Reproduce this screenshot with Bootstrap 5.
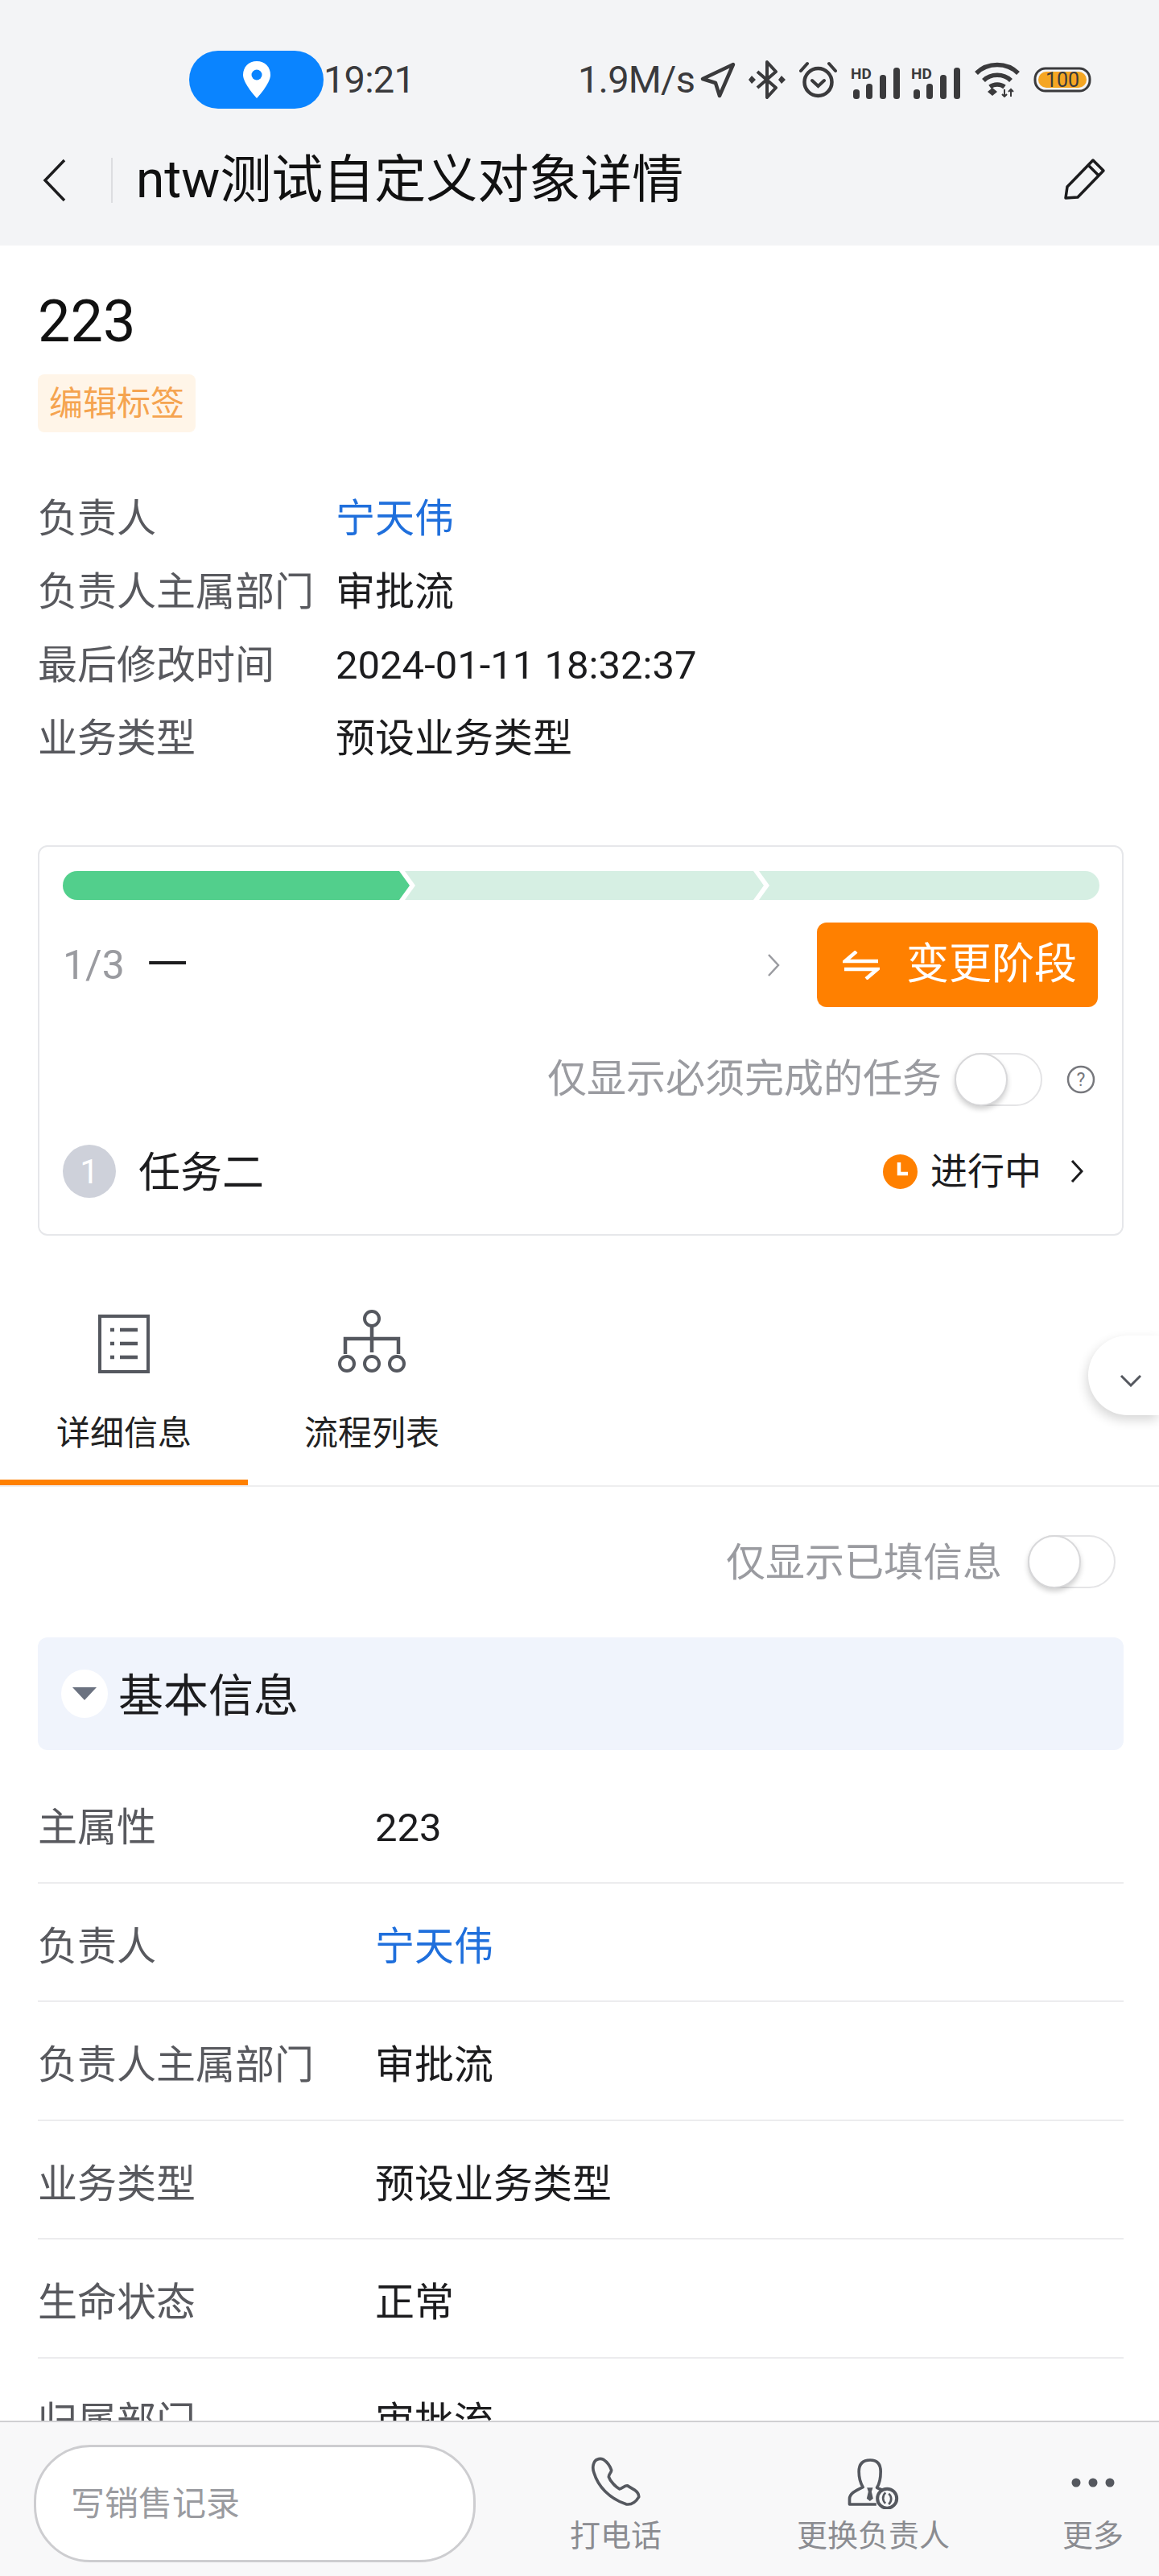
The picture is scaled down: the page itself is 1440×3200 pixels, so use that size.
<!DOCTYPE html>
<html lang="zh-CN">
<head>
  <meta charset="utf-8">
  <meta name="viewport" content="width=device-width, initial-scale=1.0">
  <link href="https://cdn.jsdelivr.net/npm/bootstrap@5.3.0/dist/css/bootstrap.min.css" rel="stylesheet">
  <title>ntw测试自定义对象详情</title>
  <style>
    html, body { margin: 0; height: 100%; overflow: hidden; background: #fff; }
    body { font-family: Roboto, "Noto Sans CJK SC", sans-serif; color: #1c1c1e; }
    svg { display: block; flex: none; }

    .app-shell { width: 1440px; height: 3200px; overflow: hidden; }

    /* top grey part */
    .top-area { height: 305px; background: #f3f4f6; }
    .status-row { height: 168px; padding-top: 63px; padding-left: 235px; }
    .loc-pill { width: 167px; height: 72px; border-radius: 36px; background: #0a84ff; }
    .clock-text { width: 114px; padding-left: 0; font-size: 47px; line-height: 72px; color: #3a3a3c; letter-spacing: -.8px; }
    .net-speed { margin-left: 202px; width: 152px; font-size: 47px; line-height: 72px; color: #3a3a3c; letter-spacing: -.8px; white-space: nowrap; }
    .status-icons { height: 72px; }
    .sig-second { margin-left: 13px; }
    .title-row { padding-left: 53px; padding-right: 67px; height: 82px; margin-top: 15px; }
    .title-sep { width: 2px; height: 56px; background: #dcdde0; margin-left: 55px; margin-right: 29px; }
    .title-text { font-size: 64px; line-height: 82px; color: #111; white-space: nowrap; }
    .pencil-icon { margin-top: -4px; margin-right: -1px; }

    /* scrollable middle */
    .detail-scroll { height: 2702px; overflow: hidden; }
    .page-pad { padding-left: 47px; padding-right: 44px; }
    .obj-name { font-size: 72px; line-height: 72px; margin-top: 59px; color: #111; }
    .tag-chip { display: inline-block; margin-top: 29px; padding: 2px 14px 0; height: 72px; line-height: 70px; font-size: 42px; border-radius: 8px; background: #fff5e8; color: #f5a450; }
    .summary-list { margin-top: 61px; }
    .summary-row { height: 91px; line-height: 93px; font-size: 49px; }
    .label-cell { width: 370px; color: #58595e; flex: none; white-space: nowrap; }
    .link-blue { color: #1f6fdc; }

    /* stage card */
    .stage-card { margin-top: 88px; height: 485px; border: 2px solid #e6e7ea; border-radius: 12px; padding: 30px 30px 0 29px; }
    .stage-bar { height: 36px; gap: 0; }
    .stage-text { font-size: 50px; line-height: 64px; }
    .stage-row { margin-top: 28px; height: 105px; }
    .muted-text { color: #9a9ba0; }
    .step-count { width: 105px; padding-left: 0; }
    .stage-chev { margin-left: auto; margin-right: 46px; }
    .btn.btn-stage { width: 349px; height: 105px; padding: 0 26px 0 32px; border: 0; border-radius: 12px; background: #ff8000; color: #fff; font-size: 53px; white-space: nowrap; }
    .btn-stage-gap { margin-right: 33px; }
    .filter-row { height: 66px; }
    .filter-text { font-size: 49px; line-height: 66px; white-space: nowrap; }
    .toggle-track { width: 109px; height: 66px; border: 2px solid #e4e4e6; border-radius: 33px; background: #fff; }
    .toggle-knob { width: 66px; height: 66px; margin: -2px; border-radius: 50%; background: #fff; border: 2px solid #d8d8da; box-shadow: 0 4px 6px rgba(0,0,0,.18); }
    .stage-filter { margin-top: 57px; padding-right: 3px; }
    .help-gap { margin-left: 30px; }
    .task-row { margin-top: 48px; height: 66px; }
    .task-num { width: 66px; height: 66px; border-radius: 50%; background: #ced1da; color: #fff; font-size: 42px; }
    .task-name { font-size: 52px; margin-left: 28px; padding-top: 5px; color: #1c1c1e; }
    .task-status { font-size: 46px; margin-left: 16px; margin-right: 36px; color: #1c1c1e; white-space: nowrap; }
    .task-chev { margin-right: 18px; }

    /* tabs */
    .tabs-wrap { margin-top: 72px; height: 240px; border-bottom: 2px solid #eeeeef; position: relative; }
    .tab-cell { width: 308px; height: 238px; }
    .tab-icon-box { height: 99px; padding-top: 26px; }
    .org-box { padding-top: 20px; }
    .tab-label { font-size: 42px; line-height: 50px; margin-top: 50px; color: #222; }
    .tab-cell-on { border-bottom: 7px solid #ff8000; }
    .float-btn { position: absolute; right: 0; top: 52px; width: 88px; height: 99px; border-radius: 50px 0 0 50px; background: #fff; box-shadow: -2px 6px 14px rgba(0,0,0,.16); }
    .float-chev { margin-left: 39px; margin-top: 12px; }

    .filter-two { margin-top: 60px; padding-right: 10px; }
    .filter-two .filter-text { padding-top: 3px; }
    .toggle-gap { margin-left: 32px; }
    .section-head { margin-top: 61px; height: 140px; border-radius: 12px; background: #f0f4fc; padding-left: 29px; }
    .tri-knob { width: 58px; height: 60px; border-radius: 50%; background: #fff; }
    .section-title { margin-left: 13px; padding-top: 5px; font-size: 56px; color: #1c1c1e; }
    .field-row { height: 147.5px; padding-top: 12px; border-bottom: 2px solid #ececee; font-size: 49px; }
    .field-first { margin-top: 18px; }
    .field-label { width: 419px; color: #58595e; flex: none; white-space: nowrap; }

    /* bottom bar */
    .bottom-bar { height: 193px; background: #f8f8f9; border-top: 2px solid #cfcfd2; padding-top: 28px; padding-left: 42px; }
    .note-input { width: 549px; height: 146px; border: 3px solid #cdcdd0; border-radius: 70px; background: #fff; font-size: 42px; color: #9a9ba0; padding-left: 43px; }
    .act-item { font-size: 38px; line-height: 44px; color: #8b8c91; white-space: nowrap; margin-top: 15px; }
    .act-icon { height: 64px; margin-bottom: 12px; }
    .act-one { width: 120px; margin-left: 114px; }
    .act-two { width: 190px; margin-left: 165px; }
    .act-three { width: 80px; margin-left: 138px; }
  </style>
</head>
<body>
<div class="app-shell">

  <div class="top-area">
    <div class="status-row d-flex">
      <div class="loc-pill d-flex align-items-center justify-content-center">
        <svg width="36" height="46" viewBox="0 0 36 46"><path d="M18 0C8 0 1 7 1 17c0 11 17 29 17 29s17-18 17-29C35 7 28 0 18 0z" fill="#fff"/><circle cx="18" cy="17" r="6.500" fill="#0a84ff"/></svg>
      </div>
      <div class="clock-text">19:21</div>
      <div class="net-speed">1.9M/s</div>
      <div class="status-icons d-flex align-items-center">
        <svg width="44" height="45" viewBox="0 0 44 45"><path d="M41 3 L3 21 L19 26 L24 42 Z" fill="none" stroke="#3a3a3c" stroke-width="4.500" stroke-linejoin="round"/></svg>
        <svg class="ms-3" width="46" height="48" viewBox="0 0 46 48"><path d="M11 14 L34 34 L23 46 V2 L34 14 L11 34" fill="none" stroke="#3a3a3c" stroke-width="4" stroke-linejoin="round"/><path d="M4 19l5 5-5 5-4-5zM41 19l5 5-5 5-4-5z" fill="#3a3a3c"/></svg>
        <svg class="ms-3" width="49" height="46" viewBox="0 0 49 46"><circle cx="24.500" cy="26" r="17" fill="none" stroke="#3a3a3c" stroke-width="4.500"/><path d="M17 24 L24.500 31 L32 24M3 12 L11 3M46 12 L38 3" fill="none" stroke="#3a3a3c" stroke-width="4" stroke-linecap="round"/></svg>
        <svg class="ms-3" width="62" height="48" viewBox="0 -8 62 48"><text x="0" y="15" font-family="Roboto, sans-serif" font-size="19" font-weight="700" fill="#3a3a3c">HD</text><rect x="3" y="28" width="8" height="12" rx="3.500" fill="#3a3a3c"/><rect x="19" y="21" width="8" height="19" rx="3.500" fill="#3a3a3c"/><rect x="36" y="10" width="8" height="30" rx="3.500" fill="#3a3a3c"/><rect x="53" y="1" width="8" height="39" rx="3.500" fill="#3a3a3c"/></svg>
        <svg class="sig-second" width="62" height="48" viewBox="0 -8 62 48"><text x="0" y="15" font-family="Roboto, sans-serif" font-size="19" font-weight="700" fill="#3a3a3c">HD</text><rect x="3" y="28" width="8" height="12" rx="3.500" fill="#3a3a3c"/><rect x="19" y="21" width="8" height="19" rx="3.500" fill="#3a3a3c"/><rect x="36" y="10" width="8" height="30" rx="3.500" fill="#3a3a3c"/><rect x="53" y="1" width="8" height="39" rx="3.500" fill="#3a3a3c"/></svg>
        <svg class="ms-3" width="58" height="44" viewBox="0 0 58 44"><path d="M3 14 C17 0 41 0 55 14M12 23 C21 14 37 14 46 23M20 31 C25 27 33 27 38 31" fill="none" stroke="#3a3a3c" stroke-width="5.500"/><path d="M29 34l6 5-6 5-6-5z" fill="#3a3a3c" transform="translate(-6 -2)"/><path d="M38 34v9M46 34v9M35 40l3 3 3-3M43 37l3-3 3 3" fill="none" stroke="#3a3a3c" stroke-width="2"/></svg>
        <svg class="ms-3" width="72" height="32" viewBox="0 0 72 32"><rect x="2" y="2" width="68" height="28" rx="13" fill="none" stroke="#3a3a3c" stroke-width="3"/><rect x="6" y="6" width="60" height="20" rx="10" fill="#f5a623"/><text x="36" y="25" text-anchor="middle" font-family="Roboto, sans-serif" font-size="25" fill="#3a3a3c">100</text></svg>
      </div>
    </div>
    <div class="title-row d-flex align-items-center">
      <svg width="30" height="54" viewBox="0 0 30 54"><path d="M27 2 L3 27 L27 52" fill="none" stroke="#1c1c1e" stroke-width="3.500"/></svg>
      <div class="title-sep"></div>
      <div class="title-text">ntw测试自定义对象详情</div>
      <svg class="ms-auto pencil-icon" width="52" height="52" viewBox="0 0 52 52"><path d="M2 50 L4 36 L36 3 L49 16 L17 49 Z M30 9 L43 22" fill="none" stroke="#1c1c1e" stroke-width="3.500" stroke-linejoin="round"/></svg>
    </div>
  </div>

  <div class="detail-scroll">
    <div class="page-pad">
      <div class="obj-name">223</div>
      <div class="tag-chip">编辑标签</div>

      <div class="summary-list">
        <div class="summary-row d-flex"><div class="label-cell">负责人</div><div class="link-blue">宁天伟</div></div>
        <div class="summary-row d-flex"><div class="label-cell">负责人主属部门</div><div>审批流</div></div>
        <div class="summary-row d-flex"><div class="label-cell">最后修改时间</div><div>2024-01-11 18:32:37</div></div>
        <div class="summary-row d-flex"><div class="label-cell">业务类型</div><div>预设业务类型</div></div>
      </div>

      <div class="card stage-card">
        <svg class="stage-bar" width="1288" height="36" viewBox="0 0 1288 36">
          <path d="M18 0 H418 L431 18 L418 36 H18 A18 18 0 0 1 18 0z" fill="#52cf8c"/>
          <path d="M425 0 H858 L871 18 L858 36 H425 L438 18z" fill="#d6efe3"/>
          <path d="M865 0 H1270 A18 18 0 0 1 1270 36 H865 L878 18z" fill="#d6efe3"/>
        </svg>
        <div class="stage-row d-flex align-items-center stage-text">
          <div class="step-count muted-text">1/3</div>
          <div>一</div>
          <svg class="stage-chev" width="16" height="28" viewBox="0 0 16 28"><path d="M2 1 L14 14 L2 27" fill="none" stroke="#9a9ba0" stroke-width="2.500"/></svg>
          <button type="button" class="btn btn-stage d-flex align-items-center">
            <svg class="btn-stage-gap" width="46" height="36" viewBox="0 0 46 36"><path d="M17 1 L3 13 H44M29 35 L43 23 H2" fill="none" stroke="#fff" stroke-width="4.500"/></svg>
            变更阶段
          </button>
        </div>
        <div class="filter-row stage-filter d-flex align-items-center justify-content-end">
          <div class="filter-text muted-text">仅显示必须完成的任务</div>
          <div class="toggle-track ms-3"><div class="toggle-knob"></div></div>
          <svg class="help-gap" width="36" height="36" viewBox="0 0 36 36"><circle cx="18" cy="18" r="16" fill="none" stroke="#77787d" stroke-width="2.500"/><text x="18" y="26" text-anchor="middle" font-family="Roboto, sans-serif" font-size="23" fill="#77787d">?</text></svg>
        </div>
        <div class="task-row d-flex align-items-center">
          <div class="task-num d-flex align-items-center justify-content-center">1</div>
          <div class="task-name">任务二</div>
          <svg class="ms-auto" width="43" height="43" viewBox="0 0 43 43"><circle cx="21.500" cy="21.500" r="21.500" fill="#ff8000"/><path d="M20 10 V24 H31" fill="none" stroke="#fff" stroke-width="4.500"/></svg>
          <div class="task-status">进行中</div>
          <svg class="task-chev" width="16" height="28" viewBox="0 0 16 28"><path d="M2 1 L14 14 L2 27" fill="none" stroke="#1c1c1e" stroke-width="3"/></svg>
        </div>
      </div>
    </div>

    <div class="tabs-wrap d-flex">
      <div class="tab-cell tab-cell-on d-flex flex-column align-items-center">
        <div class="tab-icon-box">
          <svg width="64" height="73" viewBox="0 0 64 73"><rect x="2" y="2" width="60" height="69" fill="none" stroke="#55585f" stroke-width="4"/><path d="M15 19h5M27 19h22M15 36h5M27 36h22M15 53h5M27 53h22" stroke="#55585f" stroke-width="4.500"/></svg>
        </div>
        <div class="tab-label">详细信息</div>
      </div>
      <div class="tab-cell d-flex flex-column align-items-center">
        <div class="tab-icon-box org-box">
          <svg width="84" height="80" viewBox="0 0 84 80"><circle cx="42" cy="11" r="9" fill="none" stroke="#55585f" stroke-width="4"/><path d="M42 20 V53M9 55 V36 H75 V55" fill="none" stroke="#55585f" stroke-width="4.500"/><circle cx="11" cy="67" r="9" fill="none" stroke="#55585f" stroke-width="4"/><circle cx="42" cy="67" r="9" fill="none" stroke="#55585f" stroke-width="4"/><circle cx="73" cy="67" r="9" fill="none" stroke="#55585f" stroke-width="4"/></svg>
        </div>
        <div class="tab-label">流程列表</div>
      </div>
      <div class="float-btn d-flex align-items-center">
        <svg class="float-chev" width="28" height="16" viewBox="0 0 28 16"><path d="M2 2 L14 14 L26 2" fill="none" stroke="#55585f" stroke-width="3"/></svg>
      </div>
    </div>

    <div class="page-pad">
      <div class="filter-row filter-two d-flex align-items-center justify-content-end">
        <div class="filter-text muted-text">仅显示已填信息</div>
        <div class="toggle-track toggle-gap"><div class="toggle-knob"></div></div>
      </div>

      <div class="section-head d-flex align-items-center">
        <div class="tri-knob d-flex align-items-center justify-content-center">
          <svg width="30" height="16" viewBox="0 0 30 16"><path d="M0 0 H30 L15 16z" fill="#6b7280"/></svg>
        </div>
        <div class="section-title">基本信息</div>
      </div>

      <div class="field-first">
        <div class="field-row d-flex align-items-center"><div class="field-label">主属性</div><div>223</div></div>
        <div class="field-row d-flex align-items-center"><div class="field-label">负责人</div><div class="link-blue">宁天伟</div></div>
        <div class="field-row d-flex align-items-center"><div class="field-label">负责人主属部门</div><div>审批流</div></div>
        <div class="field-row d-flex align-items-center"><div class="field-label">业务类型</div><div>预设业务类型</div></div>
        <div class="field-row d-flex align-items-center"><div class="field-label">生命状态</div><div>正常</div></div>
        <div class="field-row d-flex align-items-center"><div class="field-label">归属部门</div><div>审批流</div></div>
      </div>
    </div>
  </div>

  <div class="bottom-bar d-flex align-items-start">
    <div class="note-input d-flex align-items-center">写销售记录</div>
    <div class="act-item act-one d-flex flex-column align-items-center">
      <div class="act-icon"><svg width="62" height="61" viewBox="38 36 186 182"><path d="M62 45 C48 50 42 75 50 95 C65 145 105 190 170 212 C190 215 205 205 217 185 C218 175 210 165 200 158 L175 143 C165 140 155 155 145 155 C130 148 110 125 105 110 C105 98 115 95 115 85 C110 70 100 55 85 45 C77 42 70 42 62 45 Z" fill="none" stroke="#55585f" stroke-width="11" stroke-linejoin="round"/></svg></div>
      打电话
    </div>
    <div class="act-item act-two d-flex flex-column align-items-center">
      <div class="act-icon"><svg width="67" height="65" viewBox="40 35 200 195"><path d="M150 212 H50 V192 C50 172 70 162 100 148 C92 135 85 115 85 90 C85 60 100 47 127 47 C155 47 166 62 166 90 C166 115 162 135 152 150 L170 158" fill="none" stroke="#55585f" stroke-width="11" stroke-linejoin="round"/><path d="M115 150 H137 L132 165 L138 190 L126 200 L114 190 L120 165 Z" fill="#55585f"/><circle cx="190" cy="190" r="36" fill="#f8f8f9" stroke="#55585f" stroke-width="12"/><path d="M184 168 C170 182 174 200 184 208M196 212 C210 198 206 180 196 172" fill="none" stroke="#55585f" stroke-width="8"/></svg></div>
      更换负责人
    </div>
    <div class="act-item act-three d-flex flex-column align-items-center">
      <div class="act-icon d-flex align-items-center"><svg width="54" height="12" viewBox="0 0 54 12"><circle cx="6" cy="6" r="5.500" fill="#55585f"/><circle cx="27" cy="6" r="5.500" fill="#55585f"/><circle cx="48" cy="6" r="5.500" fill="#55585f"/></svg></div>
      更多
    </div>
  </div>

</div>
<script src="https://cdn.jsdelivr.net/npm/bootstrap@5.3.0/dist/js/bootstrap.bundle.min.js"></script>
</body>
</html>
